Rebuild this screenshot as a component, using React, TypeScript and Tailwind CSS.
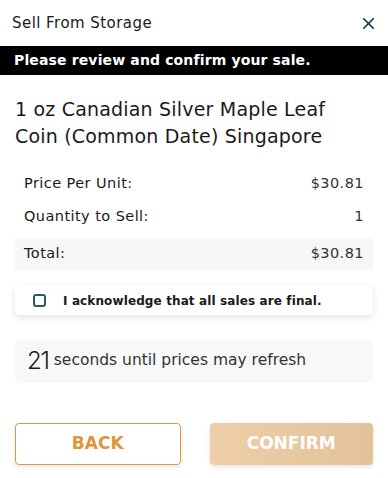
import { X } from "lucide-react";

const ROWS = [
  { label: "Price Per Unit:", value: "$30.81" },
  { label: "Quantity to Sell:", value: "1" },
];

export default function App() {
  return (
    <div className="w-[388px] h-[478px] bg-white text-[#1a1a1a]" style={{ fontFamily: "'DejaVu Sans', sans-serif" }}>
      {/* Header */}
      <div className="flex items-center justify-between h-[46px] pl-[12px] pr-[10px]">
        <h2 className="text-[15px] tracking-[0.03em] pt-[1px]">Sell From Storage</h2>
        <X size={19} strokeWidth={2.2} className="text-[#173a4c]" />
      </div>

      <div className="bg-black text-white font-bold text-[14px] h-[29px] flex items-center px-[14px] tracking-[0.01em]">
        Please review and confirm your sale.
      </div>

      <div className="px-[15px]">
        <h1 className="text-[19px] leading-[27px] mt-[21px] max-w-[340px] tracking-[0.01em]">
          1 oz Canadian Silver Maple Leaf Coin (Common Date) Singapore
        </h1>

        <div className="mt-[17px]">
          {ROWS.map((r) => (
            <div key={r.label} className="flex justify-between items-center h-[33px] px-[9px] text-[14.5px] tracking-[0.03em]">
              <span>{r.label}</span>
              <span className="text-[#333]">{r.value}</span>
            </div>
          ))}
          <div className="flex justify-between items-center h-[32px] px-[9px] text-[14.5px] tracking-[0.03em] bg-[#f7f7f7] mt-[5px]">
            <span>Total:</span>
            <span className="text-[#333]">$30.81</span>
          </div>
        </div>

        <div className="mt-[16px] h-[29px] flex items-center rounded-[4px] bg-white shadow-[0_2px_6px_rgba(0,0,0,0.12)] pl-[18px]">
          <span className="w-[13px] h-[13px] border-[2px] border-[#2f5566] rounded-[3px]" />
          <span className="ml-[17px] text-[12px] font-bold tracking-[0.01em]">I acknowledge that all sales are final.</span>
        </div>

        <div className="mt-[24px] h-[44px] rounded-[6px] bg-[#f8f8f8] flex items-center pl-[12px]">
          <span className="text-[24px] leading-none font-light tracking-[-0.05em]" style={{ fontFamily: "Inter, sans-serif" }}>21</span>
          <span className="ml-[5px] text-[15.5px] text-[#333]">seconds until prices may refresh</span>
        </div>

        <div className="mt-[40px] flex gap-[29px]">
          <button className="flex-1 h-[42px] rounded-[4px] border border-[#dc9a45] text-[#d9973f] font-bold text-[17px] shadow-[0_2px_4px_rgba(0,0,0,0.1)]">
            BACK
          </button>
          <button className="flex-1 h-[42px] rounded-[4px] bg-gradient-to-r from-[#efcfa7] to-[#e2c299] text-white font-bold text-[17px] shadow-[0_2px_4px_rgba(0,0,0,0.1)]">
            CONFIRM
          </button>
        </div>
      </div>
    </div>
  );
}
